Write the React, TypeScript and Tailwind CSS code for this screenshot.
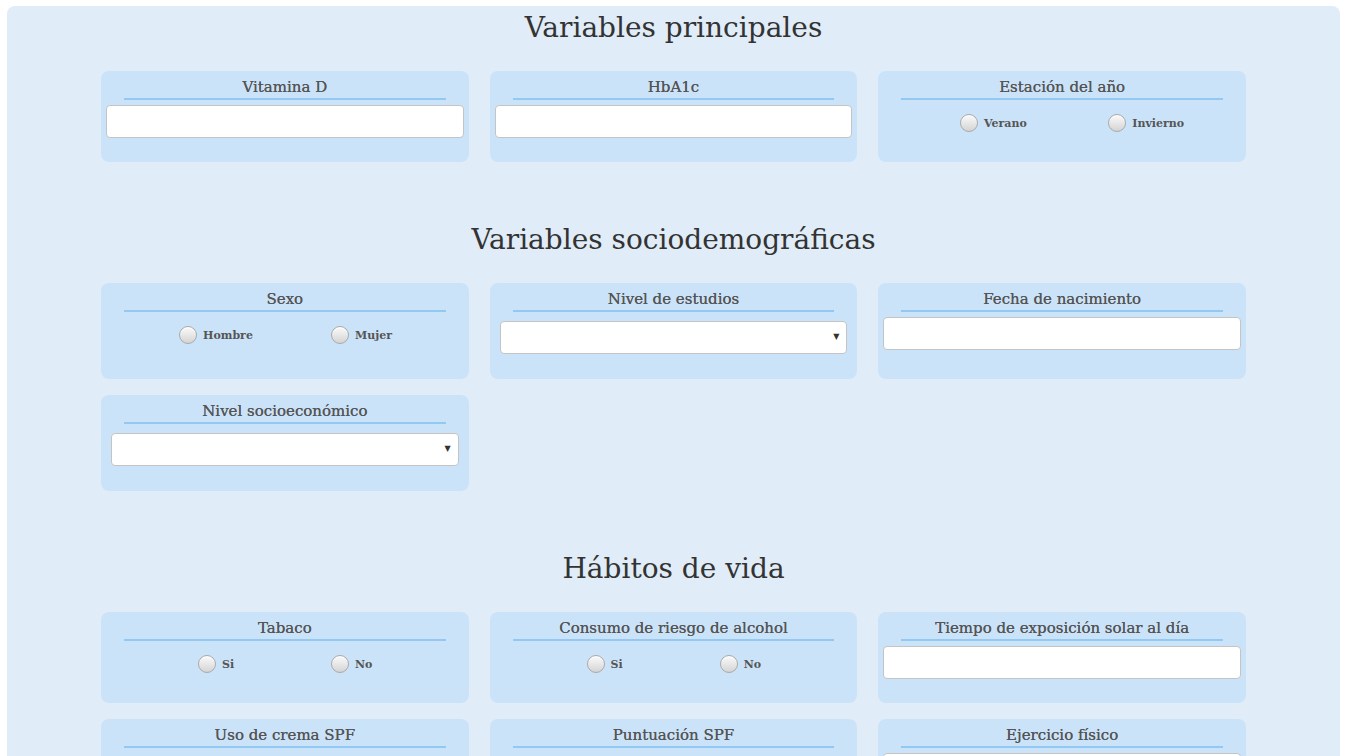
import { ChangeEvent } from "react"

type Field =
  | { kind: "input"; label: string }
  | { kind: "select"; label: string }
  | { kind: "radio"; label: string; options: [string, string] }

const sections: { title: string; fields: Field[] }[] = [
  {
    title: "Variables principales",
    fields: [
      { kind: "input", label: "Vitamina D" },
      { kind: "input", label: "HbA1c" },
      { kind: "radio", label: "Estación del año", options: ["Verano", "Invierno"] },
    ],
  },
  {
    title: "Variables sociodemográficas",
    fields: [
      { kind: "radio", label: "Sexo", options: ["Hombre", "Mujer"] },
      { kind: "select", label: "Nivel de estudios" },
      { kind: "input", label: "Fecha de nacimiento" },
      { kind: "select", label: "Nivel socioeconómico" },
    ],
  },
  {
    title: "Hábitos de vida",
    fields: [
      { kind: "radio", label: "Tabaco", options: ["Si", "No"] },
      { kind: "radio", label: "Consumo de riesgo de alcohol", options: ["Si", "No"] },
      { kind: "input", label: "Tiempo de exposición solar al día" },
      { kind: "radio", label: "Uso de crema SPF", options: ["Si", "No"] },
      { kind: "select", label: "Puntuación SPF" },
      { kind: "input", label: "Ejercicio físico" },
    ],
  },
]

function Radio({ label }: { label: string }) {
  return (
    <label className="flex items-center">
      <span className="h-[18px] w-[18px] shrink-0 rounded-full border border-[#a9a9a9] bg-linear-to-b from-[#fbfbfb] to-[#d4d4d4] shadow-[inset_0_1px_1px_rgba(255,255,255,0.8)]" />
      <span className="ml-[6px] pt-[3px] text-[11px] font-bold text-[#555]">{label}</span>
    </label>
  )
}

function FieldCard({ field }: { field: Field }) {
  const noop = (e: ChangeEvent<HTMLInputElement>) => e
  return (
    <div className="rounded-lg bg-[#cbe3f9] px-[5px] pt-[6px] pb-[24px]">
      <h4 className="mx-[18px] border-b-2 border-[#93c8f3] pb-[1px] text-center text-[15px] leading-[20px] text-[#555] [text-shadow:0_0_0.4px_#555]">
        {field.label}
      </h4>
      {field.kind === "input" && (
        <input
          type="text"
          onChange={noop}
          className="mt-[5px] block h-[33px] w-full rounded-[4px] border border-[#c4c4c4] bg-white px-2 outline-none"
        />
      )}
      {field.kind === "select" && (
        <div className="relative mx-[5px] mt-[9px] mb-[1px] h-[33px] rounded-[4px] border border-[#c4c4c4] bg-white">
          <span className="absolute right-[7px] top-[11px] text-[8px] leading-none text-[#333]">▼</span>
        </div>
      )}
      {field.kind === "radio" && (
        <div className="mt-[7px] flex h-[31px] items-center">
          <div className="ml-[36px] flex w-[148px] justify-center">
            <Radio label={field.options[0]} />
          </div>
          <div className="ml-[41px]">
            <Radio label={field.options[1]} />
          </div>
        </div>
      )}
    </div>
  )
}

export default function App() {
  return (
    <div className="min-h-screen bg-white pt-[6px] pl-[7px] pr-[5px] font-['DejaVu_Serif',serif]">
      <div className="rounded-lg bg-[#e0ecf7] pb-[40px]">
        {sections.map((s, i) => (
          <section key={s.title} className={i === 0 ? "" : "mt-[56px]"}>
            <h2 className="h-[43px] text-center text-[28px] leading-[43px] text-[#333]">{s.title}</h2>
            <div className="mx-auto mt-[22px] grid w-[1145px] grid-cols-3 gap-x-[21px] gap-y-[16px]">
              {s.fields.map((f) => (
                <FieldCard key={f.label} field={f} />
              ))}
            </div>
          </section>
        ))}
      </div>
    </div>
  )
}
